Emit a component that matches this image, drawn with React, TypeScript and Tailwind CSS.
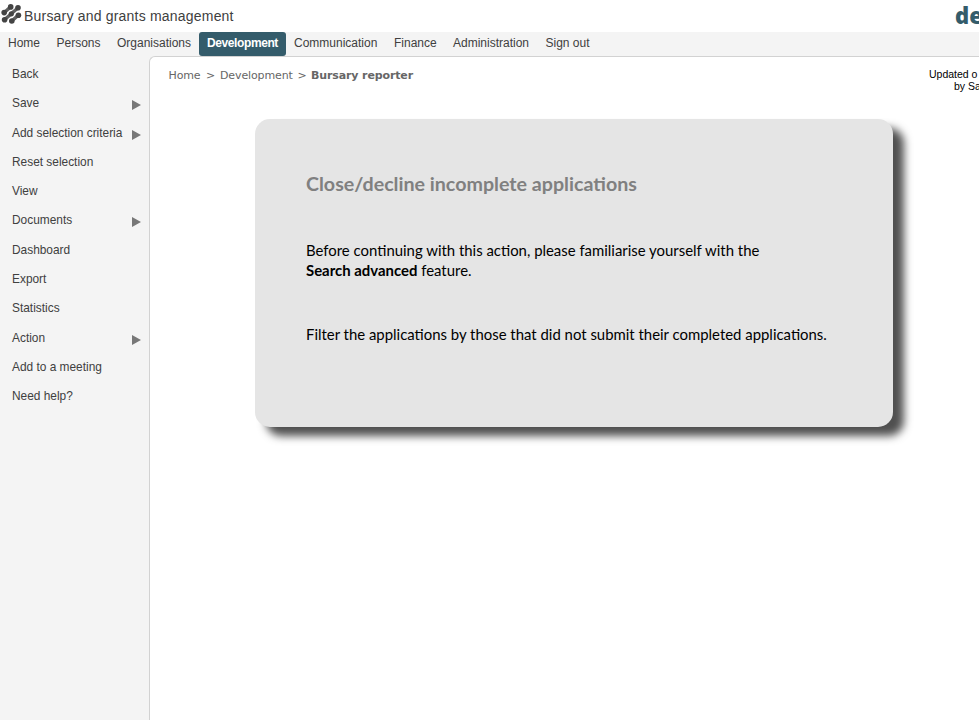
import React from "react";

const nav = [
  { label: "Home", w: "w-[48.5px]" },
  { label: "Persons", w: "w-[60.5px]" },
  { label: "Organisations", w: "w-[90px]" },
  { label: "Development", w: "w-[87px]", active: true },
  { label: "Communication", w: "w-[100px]" },
  { label: "Finance", w: "w-[59px]" },
  { label: "Administration", w: "w-[92.5px]" },
  { label: "Sign out", w: "w-[61px]" },
];

const menu = [
  { label: "Back" },
  { label: "Save", sub: true },
  { label: "Add selection criteria", sub: true },
  { label: "Reset selection" },
  { label: "View" },
  { label: "Documents", sub: true },
  { label: "Dashboard" },
  { label: "Export" },
  { label: "Statistics" },
  { label: "Action", sub: true },
  { label: "Add to a meeting" },
  { label: "Need help?" },
];

function Logo() {
  return (
    <svg className="mt-[4px] ml-[1px] h-[20px] w-[21px] shrink-0" viewBox="0 0 21 20" fill="#444" stroke="#606060" strokeWidth="3.4">
      <path d="M3.4 8.6 9.7 2.8M3.8 15.6 10.3 9.8 17 3.8M10.8 17 17.2 11.2" />
      <g stroke="none">
        <circle cx="9.7" cy="2.9" r="2.8" />
        <circle cx="17" cy="3.8" r="2.8" />
        <circle cx="3.2" cy="8.6" r="2.8" />
        <circle cx="10.3" cy="9.8" r="2.6" />
        <circle cx="17.4" cy="11.2" r="2.8" />
        <circle cx="3.6" cy="15.8" r="2.8" />
        <circle cx="10.8" cy="17" r="2.8" />
      </g>
    </svg>
  );
}

export default function App() {
  return (
    <div className="flex h-[720px] w-[979px] flex-col overflow-hidden bg-[#f4f4f4] font-['Liberation_Sans',Arial,sans-serif] text-[12px] text-[#404040]">
      <header className="flex h-[32px] shrink-0 justify-between bg-white">
        <div className="flex">
          <Logo />
          <h1 className="ml-[2px] pt-[6px] text-[14px] leading-[20px] tracking-[0.2px] whitespace-nowrap">Bursary and grants management</h1>
        </div>
        <div className="w-[24px] overflow-hidden text-[22px] leading-[31px] font-extrabold whitespace-nowrap text-[#345c6b] font-['Open_Sans',sans-serif]">de</div>
      </header>
      <nav className="flex h-[24px] shrink-0">
        {nav.map((n) => (
          <div
            key={n.label}
            className={`${n.w} shrink-0 pl-[8px] leading-[22px] whitespace-nowrap ${n.active ? "rounded-[3px] bg-[#345c6b] font-bold tracking-[-0.4px] text-white" : ""}`}
          >
            {n.label}
          </div>
        ))}
      </nav>
      <div className="flex min-h-0 flex-1">
        <aside className="w-[149px] shrink-0 pt-[3px]">
          {menu.map((m) => (
            <div key={m.label} className="flex h-[29.3px] justify-between pr-[8.5px] pl-[12px] text-[11.9px] leading-[31.3px] whitespace-nowrap">
              <span>{m.label}</span>
              {m.sub && (
                <svg className="mt-[12px] h-[10px] w-[9px]" viewBox="0 0 9 10" fill="#777">
                  <path d="M0 0 9 5 0 10Z" />
                </svg>
              )}
            </div>
          ))}
        </aside>
        <main className="min-w-0 flex-1 rounded-tl-[6px] border-t border-l border-[#d2d2d2] bg-white">
          <div className="flex h-[62px] justify-between pt-[10px] pl-[18.5px]">
            <div className="flex pt-px text-[11px] leading-[16px] tracking-[-0.12px] text-[#666] font-['DejaVu_Sans',Verdana,sans-serif] whitespace-nowrap">
              <span className="w-[37.5px]">Home</span>
              <span className="w-[14px]">&gt;</span>
              <span className="w-[77.5px]">Development</span>
              <span className="w-[13.5px]">&gt;</span>
              <b>Bursary reporter</b>
            </div>
            <div className="w-[50px] overflow-hidden pt-[1px] text-[10.5px] leading-[12px] whitespace-nowrap text-black">
              <div>Updated o</div>
              <div className="pl-[25px]">by Sa</div>
            </div>
          </div>
          <section className="ml-[105px] h-[308px] w-[638px] rounded-[15px] bg-[#e5e5e5] px-[51px] pt-[53px] text-[14.91px] leading-[20px] text-black shadow-[11px_9px_9px_0px_#505050] font-['Lato',sans-serif] whitespace-nowrap">
            <h2 className="text-[19.65px] leading-[24px] font-bold text-[#808080]">Close/decline incomplete applications</h2>
            <p className="mt-[44px]">
              <span>Before continuing with this action, please familiarise yourself with the</span>
              <br />
              <b>Search advanced</b> feature.
            </p>
            <p className="mt-[44px]">Filter the applications by those that did not submit their completed applications.</p>
          </section>
        </main>
      </div>
    </div>
  );
}
